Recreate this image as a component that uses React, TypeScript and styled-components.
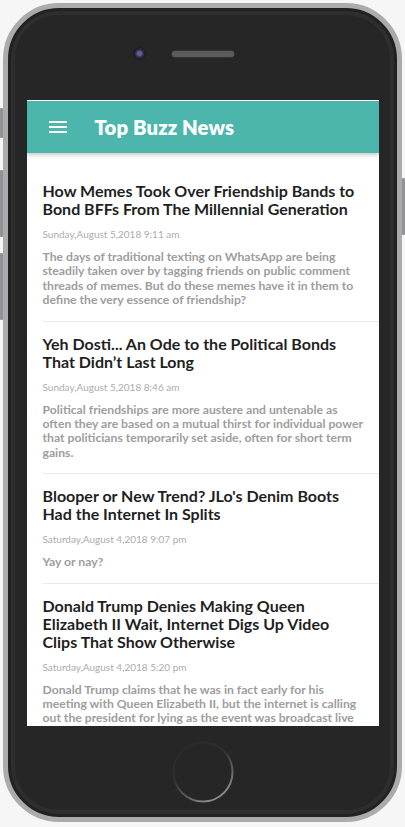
import React from "react";
import styled, { createGlobalStyle } from "styled-components";

// global ---------------------------------------------------------------------------

const GlobalStyle = createGlobalStyle`
  html, body {
    margin: 0;
    padding: 0;
    background: #f6f6f6;
  }
  body {
    font-family: Lato, "Open Sans", sans-serif;
  }
  * {
    box-sizing: border-box;
  }
`;

// styled-components----------------------------------------------------------------

const Stage = styled.div`
  width: 405px;
  height: 827px;
  padding: 3px;
`;

const Phone = styled.div`
  position: relative;
  width: 399px;
  height: 819px;
  border: 5px solid #ababab;
  border-radius: 56px;
  background: #262626;
  box-shadow: inset 0 0 0 3px #222, inset 0 0 0 7px #2e2e2e;
  display: flex;
  flex-direction: column;
  align-items: center;
`;

const SideButton = styled.span<{ $side: "left" | "right"; $top: number; $h: number }>`
  position: absolute;
  ${(p) => (p.$side === "left" ? "left: -8px;" : "right: -8px;")}
  top: ${(p) => p.$top}px;
  width: 3px;
  height: ${(p) => p.$h}px;
  background: #919196;
  border-radius: 1px;
`;

const TopBezel = styled.div`
  width: 100%;
  height: 92px;
  display: grid;
  grid-template-columns: 1fr auto 1fr;
  align-items: center;
  align-content: start;
  padding-top: 39px;
`;

const Camera = styled.span`
  justify-self: end;
  margin-right: 26px;
  width: 13px;
  height: 13px;
  border-radius: 50%;
  background: radial-gradient(circle, #6a5a94 0 22%, #3a3350 38%, #1c1c20 62%, #202020 100%);
`;

const Speaker = styled.span`
  width: 62px;
  height: 6px;
  border-radius: 3px;
  background-color: #2f2f2f;
  background-image: radial-gradient(#5c5c5c 0.7px, transparent 0.9px);
  background-size: 2px 2px;
  box-shadow: 0 0 0 0.5px #444;
`;

const Screen = styled.div`
  width: 352px;
  height: 626px;
  background: #fff;
  border-top: 1px solid #fff;
  overflow: hidden;
  display: flex;
  flex-direction: column;
`;

const AppBar = styled.header`
  position: relative;
  z-index: 1;
  flex: none;
  height: 52px;
  background: #4db6ac;
  box-shadow: 0 2px 4px rgba(0, 0, 0, 0.22);
  display: flex;
  align-items: center;
  gap: 25px;
  padding-left: 19px;
`;

const MenuIcon = styled.svg`
  width: 24px;
  height: 24px;
  fill: #fff;
`;

const AppTitle = styled.h1`
  margin: 0;
  color: #fff;
  font-size: 20.3px;
  font-weight: 800;
  letter-spacing: 0.1px;
`;

const NewsList = styled.ul`
  list-style: none;
  margin: 0;
  padding: 16px 0 0 16px;
`;

const NewsItem = styled.li`
  padding: 13px 10px 13px 0;
  border-bottom: 1px solid #e9e9e9;
`;

const NewsTitle = styled.h3`
  margin: 0;
  padding-right: 6px;
  color: #1f1f1f;
  font-size: 16px;
  line-height: 18px;
  font-weight: 700;
`;

const NewsDate = styled.div`
  margin-top: 9px;
  color: #acacac;
  font-size: 10px;
  line-height: 14px;
`;

const NewsSummary = styled.p`
  margin: 9px 0 0;
  color: #9d9d9d;
  font-size: 12.2px;
  line-height: 14.4px;
  font-weight: 700;
`;

const BottomBezel = styled.div`
  flex: 1;
  width: 100%;
  display: flex;
  align-items: center;
  justify-content: center;
`;

const HomeButton = styled.svg`
  width: 62px;
  height: 62px;
`;

// ---------------------------------------------------------------------------------

const news = [
  {
    title: "How Memes Took Over Friendship Bands to Bond BFFs From The Millennial Generation",
    date: "Sunday,August 5,2018 9:11 am",
    summary:
      "The days of traditional texting on WhatsApp are being steadily taken over by tagging friends on public comment threads of memes. But do these memes have it in them to define the very essence of friendship?",
  },
  {
    title: "Yeh Dosti... An Ode to the Political Bonds That Didn’t Last Long",
    date: "Sunday,August 5,2018 8:46 am",
    summary:
      "Political friendships are more austere and untenable as often they are based on a mutual thirst for individual power that politicians temporarily set aside, often for short term gains.",
  },
  {
    title: "Blooper or New Trend? JLo's Denim Boots Had the Internet In Splits",
    date: "Saturday,August 4,2018 9:07 pm",
    summary: "Yay or nay?",
  },
  {
    title: "Donald Trump Denies Making Queen Elizabeth II Wait, Internet Digs Up Video Clips That Show Otherwise",
    date: "Saturday,August 4,2018 5:20 pm",
    summary:
      "Donald Trump claims that he was in fact early for his meeting with Queen Elizabeth II, but the internet is calling out the president for lying as the event was broadcast live on television.",
  },
];

export default function App() {
  return (
    <Stage>
      <GlobalStyle />
      <Phone>
        <SideButton $side="left" $top={100} $h={30} />
        <SideButton $side="left" $top={162} $h={67} />
        <SideButton $side="left" $top={245} $h={67} />
        <SideButton $side="right" $top={170} $h={57} />

        <TopBezel>
          <Camera />
          <Speaker />
        </TopBezel>

        <Screen>
          <AppBar>
            <MenuIcon viewBox="0 0 24 24">
              <path d="M3 18h18v-2H3v2zm0-5h18v-2H3v2zm0-7v2h18V6H3z" />
            </MenuIcon>
            <AppTitle>Top Buzz News</AppTitle>
          </AppBar>
          <NewsList>
            {news.map((el) => (
              <NewsItem key={el.title}>
                <NewsTitle>{el.title}</NewsTitle>
                <NewsDate>{el.date}</NewsDate>
                <NewsSummary>{el.summary}</NewsSummary>
              </NewsItem>
            ))}
          </NewsList>
        </Screen>

        <BottomBezel>
          <HomeButton viewBox="0 0 62 62">
            <defs>
              <linearGradient id="ring" x1="0.2" y1="0.05" x2="0.75" y2="0.95">
                <stop offset="0" stopColor="#2a2a2a" />
                <stop offset="0.4" stopColor="#303030" />
                <stop offset="1" stopColor="#8c8c8c" />
              </linearGradient>
            </defs>
            <circle cx="31" cy="31" r="29.5" fill="none" stroke="url(#ring)" strokeWidth="2" />
          </HomeButton>
        </BottomBezel>
      </Phone>
    </Stage>
  );
}
